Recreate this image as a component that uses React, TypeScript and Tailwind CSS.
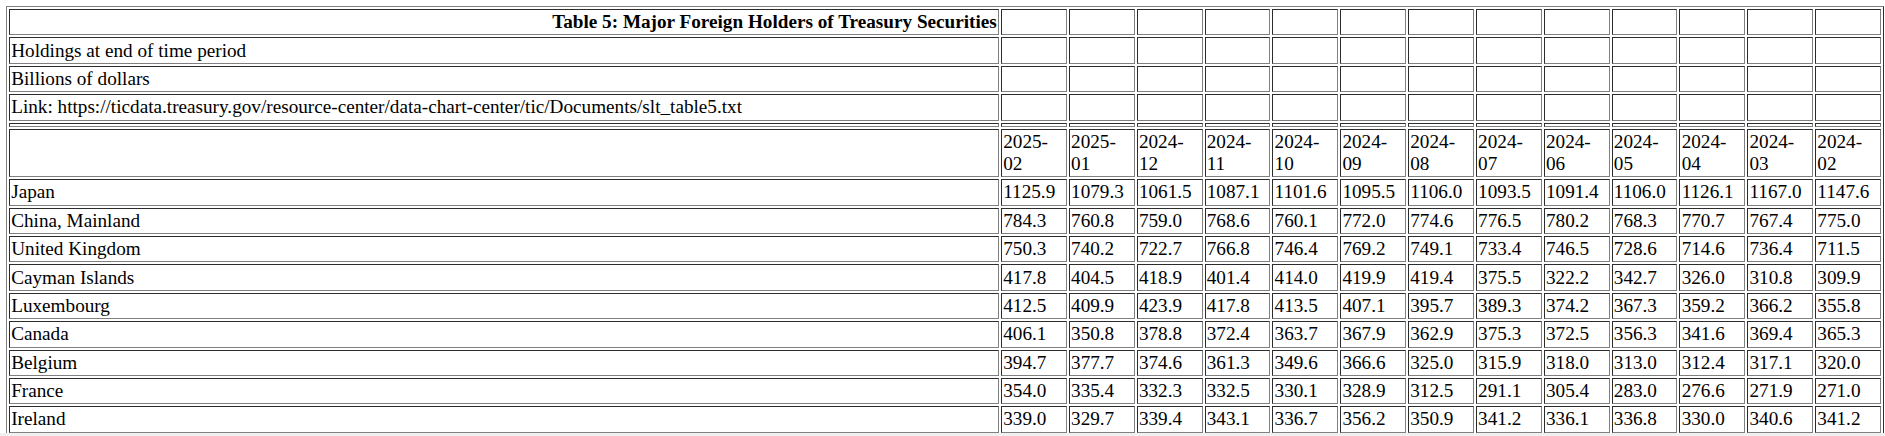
import React from "react";

const months = [
  "2025-02", "2025-01", "2024-12", "2024-11", "2024-10", "2024-09", "2024-08",
  "2024-07", "2024-06", "2024-05", "2024-04", "2024-03", "2024-02",
];

const rows: [string, string[]][] = [
  ["Japan", ["1125.9", "1079.3", "1061.5", "1087.1", "1101.6", "1095.5", "1106.0", "1093.5", "1091.4", "1106.0", "1126.1", "1167.0", "1147.6"]],
  ["China, Mainland", ["784.3", "760.8", "759.0", "768.6", "760.1", "772.0", "774.6", "776.5", "780.2", "768.3", "770.7", "767.4", "775.0"]],
  ["United Kingdom", ["750.3", "740.2", "722.7", "766.8", "746.4", "769.2", "749.1", "733.4", "746.5", "728.6", "714.6", "736.4", "711.5"]],
  ["Cayman Islands", ["417.8", "404.5", "418.9", "401.4", "414.0", "419.9", "419.4", "375.5", "322.2", "342.7", "326.0", "310.8", "309.9"]],
  ["Luxembourg", ["412.5", "409.9", "423.9", "417.8", "413.5", "407.1", "395.7", "389.3", "374.2", "367.3", "359.2", "366.2", "355.8"]],
  ["Canada", ["406.1", "350.8", "378.8", "372.4", "363.7", "367.9", "362.9", "375.3", "372.5", "356.3", "341.6", "369.4", "365.3"]],
  ["Belgium", ["394.7", "377.7", "374.6", "361.3", "349.6", "366.6", "325.0", "315.9", "318.0", "313.0", "312.4", "317.1", "320.0"]],
  ["France", ["354.0", "335.4", "332.3", "332.5", "330.1", "328.9", "312.5", "291.1", "305.4", "283.0", "276.6", "271.9", "271.0"]],
  ["Ireland", ["339.0", "329.7", "339.4", "343.1", "336.7", "356.2", "350.9", "341.2", "336.1", "336.8", "330.0", "340.6", "341.2"]],
];

const cell = "border border-[gray] [border-style:inset] p-[1.2px] align-middle text-left";

function Empties() {
  return (
    <>
      {months.map((m) => (
        <td key={m} className={cell}></td>
      ))}
    </>
  );
}

export default function App() {
  return (
    <div className="relative h-[436px] overflow-hidden bg-white pl-[6px] pt-[6px] font-['Liberation_Serif',serif] text-[19.2px] leading-[22px] text-black">
      <table className="w-[1878px] table-fixed border-separate border-spacing-[2px] border border-[gray] [border-style:outset]">
        <colgroup>
          <col className="w-[990px]" />
          {months.map((m) => (
            <col key={m} />
          ))}
        </colgroup>
        <tbody>
          <tr>
            <td className={cell + " !text-right font-bold"}>Table 5: Major Foreign Holders of Treasury Securities</td>
            <Empties />
          </tr>
          <tr>
            <td className={cell}>Holdings at end of time period</td>
            <Empties />
          </tr>
          <tr>
            <td className={cell}>Billions of dollars</td>
            <Empties />
          </tr>
          <tr>
            <td className={cell}>Link: https://ticdata.treasury.gov/resource-center/data-chart-center/tic/Documents/slt_table5.txt</td>
            <Empties />
          </tr>
          <tr>
            <td className={cell}></td>
            <Empties />
          </tr>
          <tr>
            <td className={cell}></td>
            {months.map((m) => (
              <td key={m} className={cell}>{m}</td>
            ))}
          </tr>
          {rows.map(([name, vals]) => (
            <tr key={name}>
              <td className={cell}>{name}</td>
              {vals.map((v, i) => (
                <td key={i} className={cell}>{v}</td>
              ))}
            </tr>
          ))}
        </tbody>
      </table>
      <div className="absolute bottom-0 left-0 right-0 h-[3px] bg-[#f0f0f0]" />
    </div>
  );
}
